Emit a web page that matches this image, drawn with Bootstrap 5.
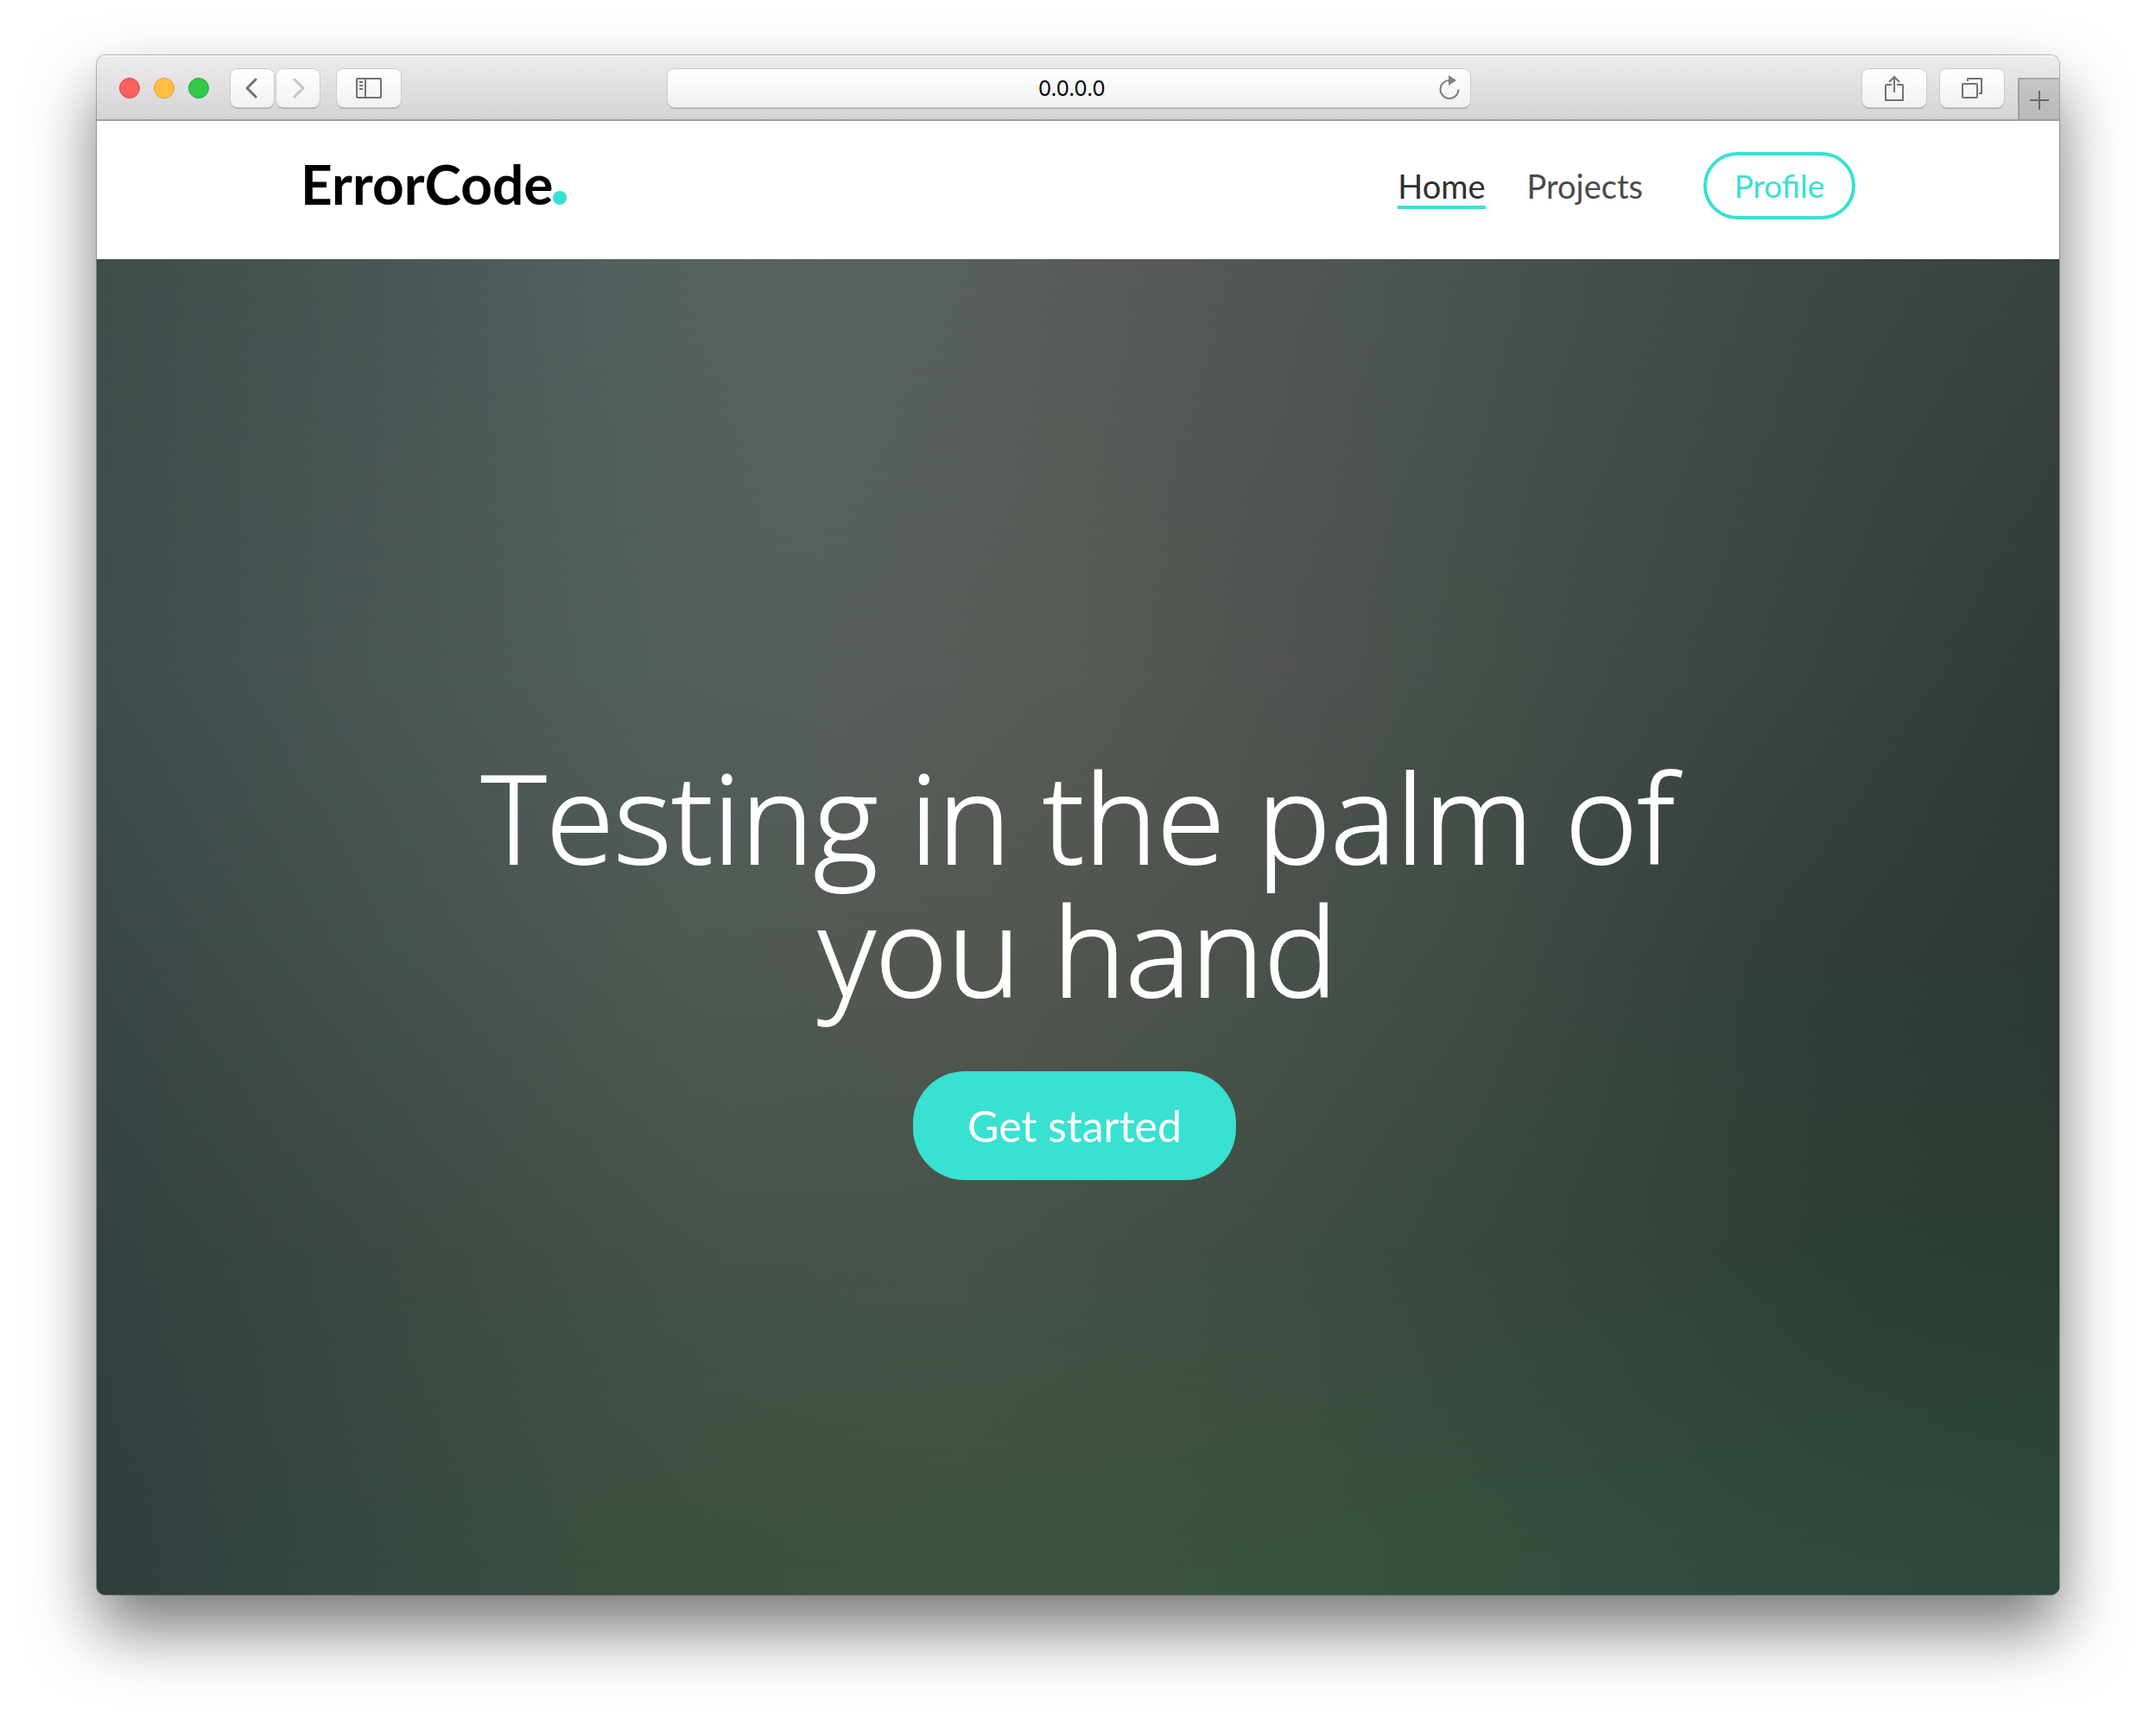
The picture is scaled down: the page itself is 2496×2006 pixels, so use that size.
<!DOCTYPE html>
<html lang="en">
<head>
<meta charset="utf-8">
<meta name="viewport" content="width=device-width, initial-scale=1">
<title>ErrorCode</title>
<link rel="stylesheet" href="https://cdn.jsdelivr.net/npm/bootstrap@5.3.0/dist/css/bootstrap.min.css">
<style>
:root{--teal:#38e1d1}
body{font-family:Lato,"Open Sans",sans-serif;background:#fff;padding:64px 112px 160px}
.browser-window{min-height:calc(100vh - 224px);border-radius:10px;box-shadow:0 0 0 1px rgba(0,0,0,.25),0 40px 76px rgba(0,0,0,.53)}
.toolbar{display:grid;grid-template-columns:29.1% 40.9% 1fr;height:76px;background:linear-gradient(#edebee,#d5d3d6);border-bottom:2px solid #a19fa3;box-shadow:inset 0 2px 0 #f6f5f7;padding-top:16px}
.lights{gap:16px;padding:10px 25px 0 26px}
.light{width:24px;height:24px;border-radius:50%;border:1px solid}
.light-red{background:#fc605c;border-color:#df4744}
.light-amber{background:#fdbe41;border-color:#dd9f33}
.light-green{background:#34c84a;border-color:#27a934}
.tool-btn{height:44px;width:74px;padding:0;border:0;border-radius:8px;background:linear-gradient(#fff,#f1f1f1);box-shadow:0 0 0 1px #cccacd,0 2px 0 #a9a7aa;display:flex;align-items:center;justify-content:center;color:#737373}
.tool-half{width:50px}
.tool-dim{color:#c2c2c2}
.history{gap:3px;margin-right:20px}
.address{height:44px;border:0;border-radius:8px;background:linear-gradient(#fff,#f0f0f0);box-shadow:0 0 0 1px #cccacd,0 2px 0 #a9a7aa;font:24px/44px Inter,sans-serif;text-align:center;color:#000;padding:2px 0 0 6px}
.reload{right:11px;top:5px;border:0;padding:0;background:none;color:#808080;line-height:0}
.tab-plus{width:48px;height:48px;margin-top:10px;border:0;border-left:2px solid #a09ea2;border-top:2px solid #a9a7ab;background:linear-gradient(#c7c5c8,#bab8bb);color:#6c6a6d;padding:0}
.site-nav{height:160px;padding:36px 236px 0 236px;background:#fff}
.brand{font-size:64px;line-height:74px;font-weight:700;color:#000;text-decoration:none}
.brand-dot{width:16px;height:16px;border-radius:50%;background:var(--teal)}
.menu-link{font-size:38px;line-height:42px;padding-bottom:2px;color:#4a4a4a;text-decoration:none;border-bottom:4px solid transparent;margin-top:18px}
.menu-link.active{color:#2f2f2f;border-color:var(--teal)}
.profile-btn{width:176px;height:78px;margin-left:70px;border:4px solid var(--teal);border-radius:39px;color:var(--teal);font-size:37px;background:#fff;padding:0}
.hero{background:linear-gradient(90deg,#3f4e4b 0%,#495654 14%,#52605f 25%,#59645f 35%,#59615d 44%,#585b59 52%,#4f5753 64%,#464f4b 76%,#3e4947 88%,#39443f 100%)}
.hero-tone{inset:0}
.tone-upper{background:linear-gradient(90deg,#3f4d4c 0%,#4a5654 14%,#535f5a 28%,#585f5c 38%,#565b54 50%,#505350 61%,#455049 70%,#3b4542 85%,#303b37 100%);-webkit-mask:linear-gradient(transparent 0%,#000 32%);mask:linear-gradient(transparent 0%,#000 32%)}
.tone-middle{background:linear-gradient(90deg,#3b4746 0%,#46524e 16%,#505a53 30%,#535850 45%,#4b534b 58%,#414c45 70%,#333f3b 85%,#2c3834 100%);-webkit-mask:linear-gradient(transparent 32%,#000 52%);mask:linear-gradient(transparent 32%,#000 52%)}
.tone-lower{background:linear-gradient(90deg,#344140 0%,#3e4a43 16%,#47534a 32%,#48534a 44%,#404d43 60%,#36463b 75%,#2c3f33 90%,#2a3d31 100%);-webkit-mask:linear-gradient(transparent 52%,#000 74%);mask:linear-gradient(transparent 52%,#000 74%)}
.tone-floor{background:linear-gradient(90deg,#2f3e3f 0%,#344841 12%,#3a4f40 25%,#3d5241 40%,#3c5341 52%,#35503f 70%,#304b3e 85%,#2d493c 100%);-webkit-mask:linear-gradient(transparent 74%,#000 98%);mask:linear-gradient(transparent 74%,#000 98%)}
.hero-copy{padding-top:88px}
.headline{font-family:"Open Sans",sans-serif;font-size:143px;line-height:154px;font-weight:300;-webkit-text-stroke:2px #fff;max-width:1500px;margin:0 0 64px}
.start-btn{height:126px;width:374px;border:0;border-radius:60px;background:var(--teal);color:#fff;font-size:50px;padding:0}
</style>
</head>
<body>
<div class="browser-window d-flex flex-column overflow-hidden">
  <div class="toolbar">
    <div class="d-flex">
      <div class="lights d-flex"><span class="light light-red"></span><span class="light light-amber"></span><span class="light light-green"></span></div>
      <div class="history d-flex">
        <button class="tool-btn tool-half" type="button" aria-label="Back"><svg width="16" height="26" viewBox="0 0 16 26" fill="none" stroke="currentColor" stroke-width="3" stroke-linecap="round" stroke-linejoin="round"><path d="M12 3 2 13l10 10"/></svg></button>
        <button class="tool-btn tool-half tool-dim" type="button" aria-label="Forward"><svg width="16" height="26" viewBox="0 0 16 26" fill="none" stroke="currentColor" stroke-width="3" stroke-linecap="round" stroke-linejoin="round"><path d="m4 3 10 10L4 23"/></svg></button>
      </div>
      <button class="tool-btn" type="button" aria-label="Sidebar"><svg width="30" height="24" viewBox="0 0 30 24" fill="none" stroke="currentColor" stroke-width="2"><rect x="1" y="1" width="28" height="22" rx="1"/><path d="M11 1v22M4 5h4M4 9h4M4 13h4"/></svg></button>
    </div>
    <div class="position-relative">
      <input class="address w-100" type="text" value="0.0.0.0" aria-label="Address">
      <button class="reload position-absolute" type="button" aria-label="Reload"><svg width="26" height="32" viewBox="0 0 26 32"><path d="M14 8A10.500 10.500 0 1 0 23.500 18.500" fill="none" stroke="currentColor" stroke-width="2"/><path d="M12 2v12l9-6z" fill="currentColor"/></svg></button>
    </div>
    <div class="d-flex justify-content-end">
      <button class="tool-btn me-3" type="button" aria-label="Share"><svg width="24" height="32" viewBox="0 0 24 32" fill="none" stroke="currentColor" stroke-width="2"><path d="M9 12H3a1 1 0 0 0-1 1v17h20V13a1 1 0 0 0-1-1h-6M12 21V3M6 9l6-6 6 6"/></svg></button>
      <button class="tool-btn me-3" type="button" aria-label="Tabs"><svg width="26" height="26" viewBox="0 0 26 26" fill="none" stroke="currentColor" stroke-width="2"><rect x="2" y="8" width="17" height="16" rx="1"/><path d="M8 5V2h16v17h-3"/></svg></button>
      <button class="tab-plus" type="button" aria-label="New tab"><svg width="22" height="22" viewBox="0 0 22 22" stroke="currentColor" stroke-width="2"><path d="M11 0v22M0 11h22"/></svg></button>
    </div>
  </div>
  <nav class="site-nav d-flex justify-content-between align-items-start">
    <a class="brand d-flex align-items-baseline" href="#">ErrorCode<span class="brand-dot"></span></a>
    <div class="d-flex align-items-start">
      <a class="menu-link active me-5" href="#">Home</a>
      <a class="menu-link" href="#">Projects</a>
      <button class="profile-btn" type="button">Profile</button>
    </div>
  </nav>
  <main class="hero position-relative flex-fill d-flex justify-content-center align-items-center">
    <div class="hero-tone tone-upper position-absolute"></div>
    <div class="hero-tone tone-middle position-absolute"></div>
    <div class="hero-tone tone-lower position-absolute"></div>
    <div class="hero-tone tone-floor position-absolute"></div>
    <div class="hero-copy position-relative text-center text-white">
      <h1 class="headline">Testing in the palm of you hand</h1>
      <button class="start-btn me-2" type="button">Get started</button>
    </div>
  </main>
</div>
<script src="https://cdn.jsdelivr.net/npm/bootstrap@5.3.0/dist/js/bootstrap.bundle.min.js"></script>
</body>
</html>
